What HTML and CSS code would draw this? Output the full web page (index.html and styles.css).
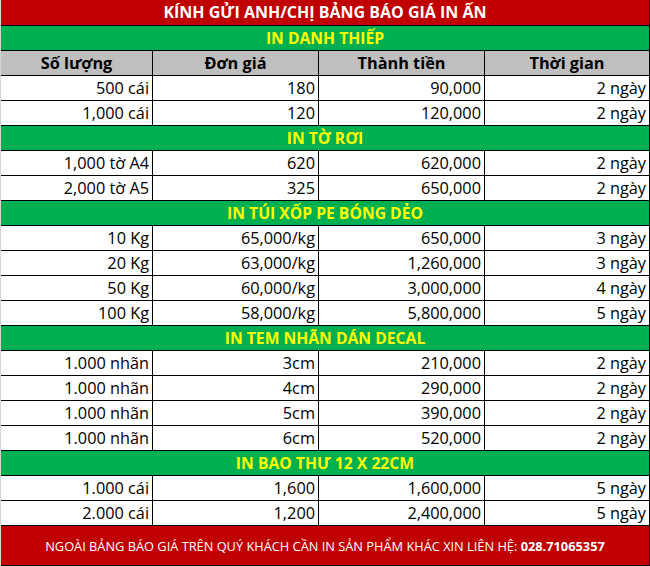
FILE: index.html
```html
<!DOCTYPE html>
<html lang="vi">
<head>
<meta charset="utf-8">
<title>Bảng báo giá in ấn</title>
<link rel="stylesheet" href="styles.css">
</head>
<body>
<div class="sheet">
  <div class="title">KÍNH GỬI ANH/CHỊ BẢNG BÁO GIÁ IN ẤN</div>

  <div class="section">IN DANH THIẾP</div>
  <div class="row head"><div>Số lượng</div><div>Đơn giá</div><div>Thành tiền</div><div>Thời gian</div></div>
  <div class="row"><div>500 cái</div><div>180</div><div>90,000</div><div>2 ngày</div></div>
  <div class="row"><div>1,000 cái</div><div>120</div><div>120,000</div><div>2 ngày</div></div>

  <div class="section">IN TỜ RƠI</div>
  <div class="row"><div>1,000 tờ A4</div><div>620</div><div>620,000</div><div>2 ngày</div></div>
  <div class="row"><div>2,000 tờ A5</div><div>325</div><div>650,000</div><div>2 ngày</div></div>

  <div class="section">IN TÚI XỐP PE BÓNG DẺO</div>
  <div class="row"><div>10 Kg</div><div>65,000/kg</div><div>650,000</div><div>3 ngày</div></div>
  <div class="row"><div>20 Kg</div><div>63,000/kg</div><div>1,260,000</div><div>3 ngày</div></div>
  <div class="row"><div>50 Kg</div><div>60,000/kg</div><div>3,000,000</div><div>4 ngày</div></div>
  <div class="row"><div>100 Kg</div><div>58,000/kg</div><div>5,800,000</div><div>5 ngày</div></div>

  <div class="section">IN TEM NHÃN DÁN DECAL</div>
  <div class="row"><div>1.000 nhãn</div><div>3cm</div><div>210,000</div><div>2 ngày</div></div>
  <div class="row"><div>1.000 nhãn</div><div>4cm</div><div>290,000</div><div>2 ngày</div></div>
  <div class="row"><div>1.000 nhãn</div><div>5cm</div><div>390,000</div><div>2 ngày</div></div>
  <div class="row"><div>1.000 nhãn</div><div>6cm</div><div>520,000</div><div>2 ngày</div></div>

  <div class="section">IN BAO THƯ 12 X 22CM</div>
  <div class="row"><div>1.000 cái</div><div>1,600</div><div>1,600,000</div><div>5 ngày</div></div>
  <div class="row"><div>2.000 cái</div><div>1,200</div><div>2,400,000</div><div>5 ngày</div></div>

  <div class="footer">NGOÀI BẢNG BÁO GIÁ TRÊN QUÝ KHÁCH CẦN IN SẢN PHẨM KHÁC XIN LIÊN HỆ: <b>028.71065357</b></div>
</div>
</body>
</html>
```

FILE: styles.css
```css
html, body {
  margin: 0;
  padding: 0;
  background: #ffffff;
}

.sheet {
  width: 650px;
  font-family: "Open Sans", "Liberation Sans", sans-serif;
  color: #000;
  border-left: 1px solid #d4d4d4;
  box-sizing: border-box;
}

.title {
  height: 25px;
  background: #c00000;
  color: #ffffff;
  font-weight: 700;
  font-size: 16px;
  line-height: 25px;
  text-align: center;
  border-right: 1px solid #1a1a1a;
  box-sizing: border-box;
}

.section {
  height: 25px;
  background: #00b050;
  color: #ffff00;
  font-weight: 700;
  font-size: 15.7px;
  line-height: 24px;
  text-align: center;
  border-top: 1px solid #000;
  border-right: 1px solid #000;
  box-sizing: border-box;
}

.row {
  display: grid;
  grid-template-columns: 152px 166px 166px 165px;
  height: 25px;
  border-top: 1px solid #000;
  box-sizing: border-box;
  font-size: 16.3px;
  line-height: 24px;
}

.row > div {
  border-right: 1px solid #000;
  text-align: right;
  padding-right: 3px;
  white-space: nowrap;
}

.row.head {
  background: #bfbfbf;
  font-weight: 700;
}

.row.head > div {
  text-align: center;
  padding-right: 0;
}

.footer {
  height: 41px;
  background: #c00000;
  color: #ffffff;
  font-size: 12.8px;
  line-height: 40px;
  text-align: center;
  border-top: 1px solid #000;
  border-bottom: 1px solid #000;
  border-right: 1px solid #1a1a1a;
  box-sizing: border-box;
  white-space: nowrap;
}
```
